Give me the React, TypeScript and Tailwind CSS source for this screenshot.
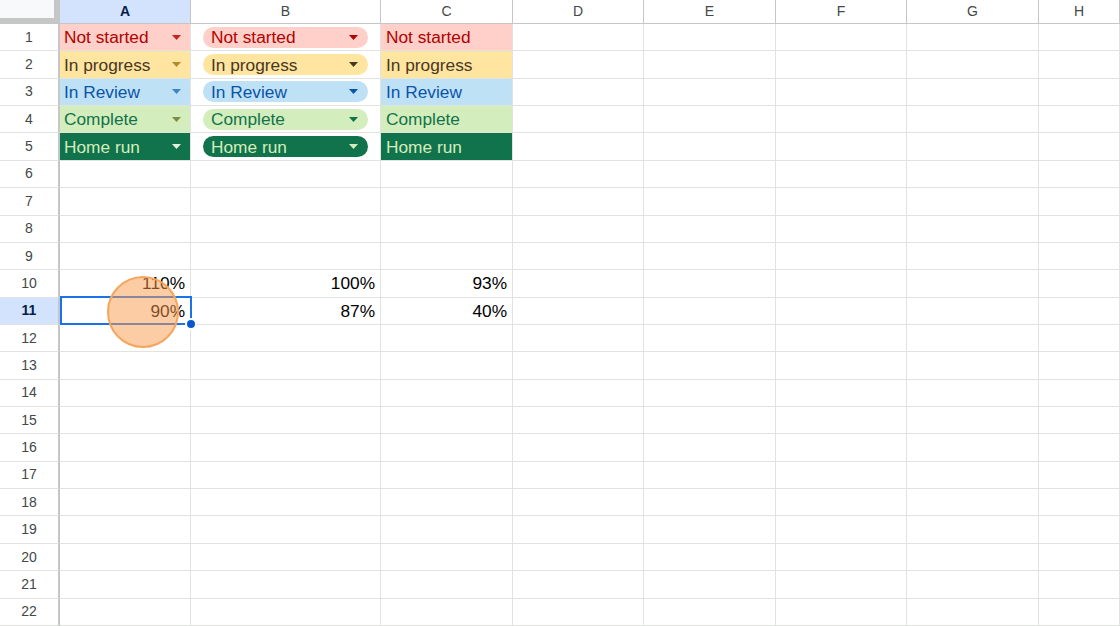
import React from "react"

type Status = { label: string; bg: string; fg: string; caretA: string }

const statuses: Status[] = [
  { label: "Not started", bg: "bg-[#ffcfc9]", fg: "text-[#b10202]", caretA: "text-[#c8251f]" },
  { label: "In progress", bg: "bg-[#ffe5a0]", fg: "text-[#473821]", caretA: "text-[#b08a2e]" },
  { label: "In Review", bg: "bg-[#bfe1f6]", fg: "text-[#0a53a8]", caretA: "text-[#3d84c6]" },
  { label: "Complete", bg: "bg-[#d4edbc]", fg: "text-[#11734b]", caretA: "text-[#7d8d3e]" },
  { label: "Home run", bg: "bg-[#11734b]", fg: "text-[#d4edbc]", caretA: "text-[#e6f0de]" },
]

const columns = ["A", "B", "C", "D", "E", "F", "G", "H"]
const widths = ["w-[131px]", "w-[190px]", "w-[132px]", "w-[131px]", "w-[132px]", "w-[131px]", "w-[132px]", "w-[81px]"]

const numbers: Record<number, string[]> = {
  10: ["110%", "100%", "93%"],
  11: ["90%", "87%", "40%"],
}

function Caret({ className }: { className: string }) {
  return (
    <svg width="9" height="5" viewBox="0 0 9 5" className={className}>
      <path d="M0 0h9L4.5 5z" fill="currentColor" />
    </svg>
  )
}

function Cell({ row, col }: { row: number; col: number }) {
  const status = row <= 5 ? statuses[row - 1] : null
  const nums = numbers[row]

  if (status && col === 0) {
    return (
      <div className={`flex h-full items-center justify-between pl-[4px] pr-[9px] ${status.bg} ${status.fg}`}>
        <span className="translate-y-[1px]">{status.label}</span>
        <Caret className={status.caretA} />
      </div>
    )
  }
  if (status && col === 1) {
    return (
      <div className="flex h-full items-center pl-[12px] pr-[12px]">
        <div className={`flex h-[21px] w-full items-center justify-between rounded-full pl-[8px] pr-[10px] ${status.bg} ${status.fg}`}>
          <span className="translate-y-[1px]">{status.label}</span>
          <Caret className="" />
        </div>
      </div>
    )
  }
  if (status && col === 2) {
    return (
      <div className={`flex h-full items-center pl-[5px] ${status.bg} ${status.fg}`}>
        <span className="translate-y-[1px]">{status.label}</span>
      </div>
    )
  }
  if (nums && col < 3) {
    return (
      <div className="flex h-full items-center justify-end pr-[5px] text-black">
        <span className="translate-y-[1px]">{nums[col]}</span>
      </div>
    )
  }
  return null
}

export default function App() {
  const rows = Array.from({ length: 22 }, (_, i) => i + 1)

  return (
    <div className="relative h-[626px] w-[1120px] overflow-hidden bg-white font-['Liberation_Sans',Arial,sans-serif] text-[17.3px]">
      {/* column headers */}
      <div className="flex h-[24px]">
        <div className="h-[24px] w-[60px] shrink-0 border-r-[6px] border-b-[6px] border-[#c4c7c5] bg-[#f8f9fa]" />
        {columns.map((c, i) => (
          <div
            key={c}
            className={`flex h-[24px] shrink-0 items-center justify-center border-r border-b border-[#c4c7c5] text-[14px] ${widths[i]} ${
              i === 0 ? "bg-[#d3e3fd] font-bold text-[#041e49]" : "bg-white text-[#444746]"
            }`}
          >
            {c}
          </div>
        ))}
      </div>

      {rows.map((r) => (
        <div key={r} className="flex h-[27.36px]">
          <div
            className={`flex h-full w-[60px] shrink-0 items-center justify-center border-r-2 border-b border-r-[#c4c7c5] border-b-[#e1e3e1] text-[14px] ${
              r === 11 ? "bg-[#d3e3fd] font-bold text-[#041e49]" : "bg-white text-[#444746]"
            }`}
          >
            {r}
          </div>
          {columns.map((c, i) => (
            <div key={c} className={`h-full shrink-0 border-r border-b border-[#e1e3e1] ${widths[i]}`}>
              <Cell row={r} col={i} />
            </div>
          ))}
        </div>
      ))}

      {/* selection on A11 */}
      <div className="pointer-events-none absolute left-[60px] top-[296px] h-[29px] w-[132px] border-2 border-[#1a73e8]" />
      <div className="pointer-events-none absolute left-[185px] top-[318px] h-[12px] w-[12px] rounded-full border-2 border-white bg-[#0b57d0]" />

      {/* click highlight */}
      <div className="pointer-events-none absolute left-[107px] top-[276px] h-[72px] w-[72px] rounded-full border-2 border-[#f7a45c] bg-[#f99a4a]/50" />
    </div>
  )
}
